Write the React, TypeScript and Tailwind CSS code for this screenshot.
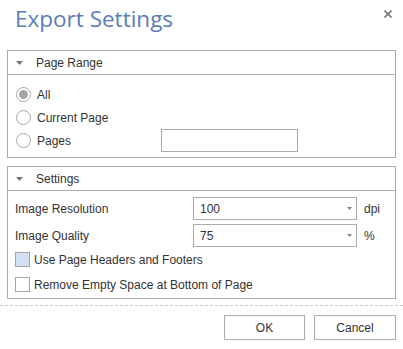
import { useState } from "react";

const Caret = ({ className }: { className?: string }) => (
  <svg width="7" height="4" viewBox="0 0 7 4" className={className}>
    <path d="M0 0h7L3.5 4z" fill="currentColor" />
  </svg>
);

function PanelHeader({ title }: { title: string }) {
  return (
    <div className="flex h-[24px] items-center border-b border-[#acacac] pl-[8px]">
      <Caret className="text-[#777]" />
      <span className="ml-[13px]">{title}</span>
    </div>
  );
}

function Radio({ checked }: { checked: boolean }) {
  return (
    <span className="flex h-[15px] w-[15px] items-center justify-center rounded-full border border-[#a6a6a6] bg-white">
      {checked && <span className="h-[9px] w-[9px] rounded-full bg-[#a6a6a6]" />}
    </span>
  );
}

function Select({ value }: { value: string }) {
  return (
    <div className="flex h-[23px] w-[164px] items-center justify-between border border-[#acacac] pl-[6px] pr-[4px]">
      <span>{value}</span>
      <svg width="5" height="3" viewBox="0 0 5 3">
        <path d="M0 0h5L2.5 3z" fill="#888" />
      </svg>
    </div>
  );
}

export default function App() {
  const [range, setRange] = useState("all");

  const radios = [
    { id: "all", label: "All" },
    { id: "current", label: "Current Page" },
    { id: "pages", label: "Pages" },
  ];

  return (
    <div className="relative h-[349px] w-[403px] overflow-hidden bg-white font-['Liberation_Sans',Arial,sans-serif] text-[12px] text-[#333]">
      {/* title */}
      <div className="flex h-[50px] items-start pl-[15px] pt-[4px]">
        <h1 className="font-['Open_Sans','Noto_Sans',sans-serif] text-[22.5px] leading-[30px] text-[#5a7db6]">
          Export Settings
        </h1>
      </div>
      <button className="absolute right-[11px] top-[10px] text-[#777]">
        <svg width="8" height="8" viewBox="0 0 8 8">
          <path d="M0.5 0.5l7 7M7.5 0.5l-7 7" stroke="currentColor" strokeWidth="1.6" />
        </svg>
      </button>

      {/* page range */}
      <div className="mx-[7px] border border-[#acacac]">
        <PanelHeader title="Page Range" />
        <div className="pb-[5px] pl-[8px] pt-[8px]">
          {radios.map((r) => (
            <div key={r.id} className="flex h-[23px] items-center">
              <div
                className="flex w-[145px] cursor-pointer items-center gap-[6px]"
                onClick={() => setRange(r.id)}
              >
                <Radio checked={range === r.id} />
                <span>{r.label}</span>
              </div>
              {r.id === "pages" && (
                <input className="h-[23px] w-[137px] border border-[#acacac] px-[5px] outline-none" />
              )}
            </div>
          ))}
        </div>
      </div>

      {/* settings */}
      <div className="mx-[7px] mt-[8px] border border-[#acacac]">
        <PanelHeader title="Settings" />
        <div className="pb-[1px] pl-[7px] pt-[6px]">
          <div className="flex h-[23px] items-center">
            <span className="w-[178px]">Image Resolution</span>
            <Select value="100" />
            <span className="ml-[7px]">dpi</span>
          </div>
          <div className="mt-[4px] flex h-[23px] items-center">
            <span className="w-[178px]">Image Quality</span>
            <Select value="75" />
            <span className="ml-[7px]">%</span>
          </div>
          <div className="flex h-[25px] items-center gap-[4px]">
            <span className="h-[15px] w-[15px] border border-[#a6a6a6] bg-[#d3e0f1]" />
            <span>Use Page Headers and Footers</span>
          </div>
          <div className="flex h-[25px] items-center gap-[4px]">
            <span className="h-[15px] w-[15px] border border-[#a6a6a6] bg-white" />
            <span>Remove Empty Space at Bottom of Page</span>
          </div>
        </div>
      </div>

      {/* footer */}
      <div className="mt-[6px] border-t border-dashed border-[#c8c8c8]" />
      <div className="flex justify-end gap-[9px] pr-[7px] pt-[9px]">
        <button className="h-[25px] w-[81px] border border-[#acacac] bg-white">OK</button>
        <button className="h-[25px] w-[82px] border border-[#acacac] bg-white">Cancel</button>
      </div>
    </div>
  );
}
